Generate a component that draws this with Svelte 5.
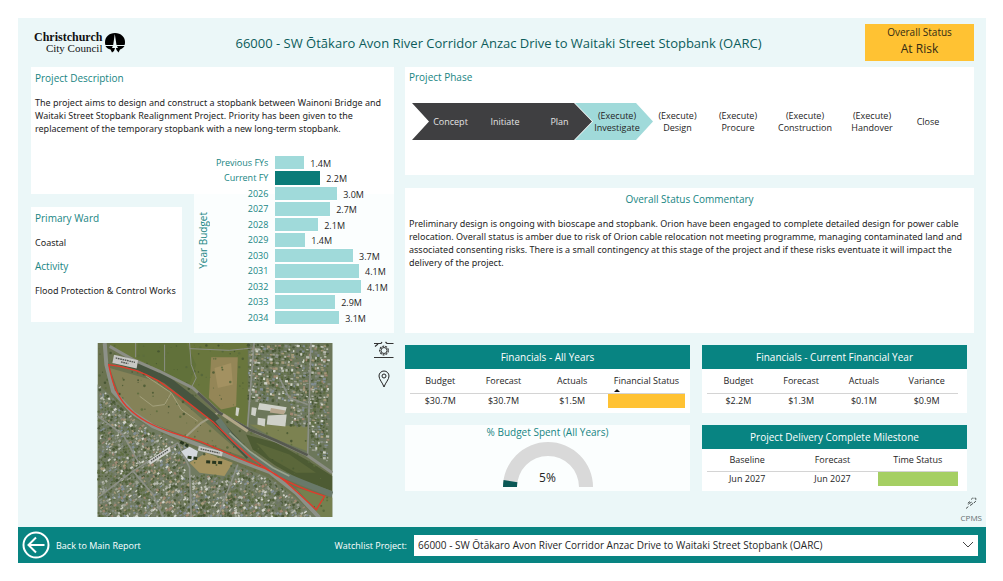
<script>
  const years = [
    ['Previous FYs', '1.4M', 29],
    ['Current FY', '2.2M', 45],
    ['2026', '3.0M', 62],
    ['2027', '2.7M', 55],
    ['2028', '2.1M', 43],
    ['2029', '1.4M', 30],
    ['2030', '3.7M', 78],
    ['2031', '4.1M', 84],
    ['2032', '4.1M', 86],
    ['2033', '2.9M', 60],
    ['2034', '3.1M', 64]
  ];
  const track = 119;

  const phases = [
    ['', 'Concept'], ['', 'Initiate'], ['', 'Plan'],
    ['(Execute)', 'Investigate'], ['(Execute)', 'Design'], ['(Execute)', 'Procure'],
    ['(Execute)', 'Construction'], ['(Execute)', 'Handover'], ['', 'Close']
  ];

  // Aerial view: roofs and trees are scattered with a seeded generator.
  let seed = 7;
  const rnd = () => (seed = (seed * 16807) % 2147483647) / 2147483647;
  const at = (line, x) => {
    for (let i = 1; i < line.length; i++) {
      const [x0, y0] = line[i - 1];
      const [x1, y1] = line[i];
      if (x <= x1) return y0 + ((x - x0) / (x1 - x0)) * (y1 - y0);
    }
    return line[line.length - 1][1];
  };
  const south = [[24, 150], [60, 180], [130, 250], [190, 290], [260, 318], [440, 392], [540, 430], [620, 490], [680, 560], [729, 600]];
  const north = [[24, 30], [130, 75], [310, 165], [390, 235], [480, 285], [650, 355], [729, 410]];
  const roofColours = ['#a3a69b', '#8b9188', '#c4c6bd', '#7b8278', '#a88a76', '#8793a0', '#e2e3dd', '#6d7568', '#b0a080'];
  const treeColours = ['#4a5a33', '#55663b', '#435230', '#5d6d3e'];
  const roofs = [];
  const trees = [];
  for (let y = 30; y < 544; y += 8) {
    for (let x = 26; x < 718; x += 9) {
      const px = x + rnd() * 5;
      const py = y + rnd() * 5;
      const c = rnd();
      const field = px > 285 && px < 425 && py < 425;
      const lower = py > at(south, px) + 6 && !field;
      const upper = px > 474 && py < at(north, px) - 18 && !(py > 200 && px < 600) && !(py > 275 && px < 660);
      if (lower || upper) {
        if (c < 0.6) roofs.push({ x: px, y: py, w: 4 + rnd() * 6, h: 3 + rnd() * 5, c: roofColours[Math.floor(rnd() * 9)], r: lower ? -35 : 5 });
        else trees.push({ x: px, y: py, r: 2 + rnd() * 3, c: treeColours[Math.floor(rnd() * 4)] });
      } else if (c < 0.08) trees.push({ x: px, y: py, r: 1 + rnd() * 3, c: treeColours[Math.floor(rnd() * 4)] });
    }
  }
</script>

<div class="page">
  <div class="board">
    <header>
      <div class="logo">
        <div class="wordmark"><b>Christchurch</b><span>City Council</span></div>
        <svg viewBox="0 0 22 22" width="22" height="22" aria-hidden="true">
          <path d="M11 1C17 1 21 5 21 10C21 11 21 12 20.600 13H1.400C1 12 1 11 1 10C1 5 5 1 11 1Z" />
          <path d="M1.500 14H20.500C19.500 16 17.500 17 16 17.500L14.500 20.500L12.500 18L11.500 14.500L10 19L8 20.500L6.500 17.500C4 17 2.500 16 1.500 14Z" />
          <path d="M10.800 2L12.500 13L14 16H8L9.200 13Z" fill="#ebf7f8" />
        </svg>
      </div>
      <h1>66000 - SW Ōtākaro Avon River Corridor Anzac Drive to Waitaki Street Stopbank (OARC)</h1>
      <div class="overall"><span>Overall Status</span><strong>At Risk</strong></div>
    </header>

    <main>
      <div class="left">
        <section class="description">
          <h2>Project Description</h2>
          <p>The project aims to design and construct a stopbank between Wainoni Bridge and<br />Waitaki Street Stopbank Realignment Project. Priority has been given to the<br />replacement of the temporary stopbank with a new long-term stopbank.</p>
        </section>
        <section class="ward">
          <h2>Primary Ward</h2>
          <p>Coastal</p>
          <h2>Activity</h2>
          <p>Flood Protection &amp; Control Works</p>
        </section>
        <div class="chartback"></div>
        <section class="chart">
          <h2 class="axis">Year Budget</h2>
          <div class="rows">
            {#each years as [label, amount, size], i}
              <div class="row">
                <span class="year">{label}</span>
                <span class="track">
                  <span class="bar" class:current={i === 1} style="width: {(size / track) * 100}%"></span>
                  <span class="amount">{amount}</span>
                </span>
              </div>
            {/each}
          </div>
        </section>
      </div>

      <div class="right">
        <section class="phase">
          <h2>Project Phase</h2>
          <div class="stepper">
            <svg viewBox="0 0 542 36" preserveAspectRatio="none" aria-hidden="true">
              <polygon points="0,0 162,0 180,18 162,36 0,36 17,18" fill="#3f3f41" />
              <polygon points="163,0 224,0 241,18 224,36 163,36 181,18" fill="#a0dada" />
            </svg>
            <ol>
              {#each phases as [prefix, name], i}
                <li class:done={i < 3}>
                  {#if prefix}<span>{prefix}</span>{/if}
                  <span>{name}</span>
                </li>
              {/each}
            </ol>
          </div>
        </section>
        <section class="commentary">
          <h2>Overall Status Commentary</h2>
          <p>Preliminary design is ongoing with bioscape and stopbank. Orion have been engaged to complete detailed design for power cable<br />relocation. Overall status is amber due to risk of Orion cable relocation not meeting programme, managing contaminated land and<br />associated consenting risks. There is a small contingency at this stage of the project and if these risks eventuate it will impact the<br />delivery of the project.</p>
        </section>
      </div>

      <div class="mapzone">
        <svg class="map" viewBox="24 25 705 523" role="img" aria-label="Aerial map of the stopbank">
          <rect x="24" y="25" width="705" height="523" fill="#6b7350" />
          <path d="M60 100L200 140L300 220L470 370L330 320L170 260L100 210Z" fill="#858258" />
          <path d="M62 25H475V280L390 230L310 155L210 105L60 40Z" fill="#69763d" />
          <path d="M145 25H290L320 90L300 150L200 100L140 70Z" fill="#61713a" />
          <path d="M365 68H445L440 215L395 225L358 190Z" fill="#948657" />
          <path d="M375 100L425 85L430 150L385 160Z" fill="#a39161" />
          <path d="M475 25H729V410L650 360L480 280Z" fill="#6c775a" />
          <path d="M480 270L655 275V350L560 315Z" fill="#7c8251" />
          <path d="M24 150L60 180L130 250L260 318L440 392L540 430L620 490L680 548H24Z" fill="#717b61" />
          <path d="M470 300L560 325L650 375L729 425V470L640 440L560 395L490 345Z" fill="#4d5b33" />
          <path d="M500 325L600 360L680 415L620 415L540 370Z" fill="#5b673a" />
          <path d="M300 385L350 355L430 385L405 425L330 415Z" fill="#a4935f" />
          <path d="M620 460L729 490V548H695Z" fill="#75804f" />
          <g opacity="0.85">
            {#each trees as t}<circle cx={t.x} cy={t.y} r={t.r} fill={t.c} />{/each}
            {#each roofs as r}<rect x={r.x} y={r.y} width={r.w} height={r.h} fill={r.c} transform="rotate({r.r} {r.x} {r.y})" />{/each}
          </g>
          <g fill="none" stroke="#8c9086" stroke-width="5">
            <path d="M494 25L474 280M665 25L655 360M24 490L130 410L265 325M265 325L300 400L305 548M445 390L385 548M24 245L100 300L150 390M130 410L190 480L220 548M570 130L600 190L655 210" />
            <path d="M300 25L305 90L320 130L305 160M300 42L420 47L490 40M138 25V68M225 30V110" stroke-width="3" />
            <path d="M150 185L190 215L225 210L245 175L275 225L325 260M170 125L245 175" stroke-width="3" stroke="#a4a17c" />
            <path d="M290 305L335 265L385 235" stroke-width="6" stroke="#a09d84" />
          </g>
          <path d="M75 75L150 96L230 135L300 190L370 248L420 302L480 365" fill="none" stroke="#47543f" stroke-width="24" />
          <path d="M385 255L420 302L480 360L560 412L640 445L729 480" fill="none" stroke="#69796a" stroke-width="18" />
          <path d="M420 295L480 350L550 400L600 425" fill="none" stroke="#9aa38e" stroke-width="5" />
          <path d="M60 35L130 75L210 110L310 160L390 235L480 285L560 320L650 360L729 415" fill="none" stroke="#8b8e84" stroke-width="9" />
          <path d="M325 175L390 235L480 285L560 318L655 362" fill="none" stroke="#56594f" stroke-width="8" />
          <path d="M400 240L475 290" fill="none" stroke="#b0a687" stroke-width="9" />
          <path d="M45 25L50 90L70 170L130 235L190 275L260 305L350 340L440 375L540 412L620 475L690 550" fill="none" stroke="#8d9188" stroke-width="12" />
          <g fill="#cfd1c9">
            <path d="M510 205L592 218L587 235L505 225ZM487 218L502 220L498 245L485 241ZM535 243L592 240L588 276L532 270ZM505 250L528 253L526 276L504 270ZM440 218L450 220L446 245L438 242Z" />
            <path d="M275 350L300 337L325 350L320 372L298 382Z" fill="#d4d8de" />
            <path d="M545 220L588 228L584 240L541 234Z" fill="#b7a78e" />
          </g>
          <g>
            <path d="M73 60L145 77L141 102L68 85Z" fill="#c7c8c5" />
            <path d="M176 379L240 336L244 350L181 391Z" fill="#d1d2cf" />
            <path d="M328 334L400 352L397 366L325 348Z" fill="#c7c8c5" />
            <path d="M78 70L136 83M94 82L116 87M184 380L236 346M333 343L390 356" stroke="#50534f" stroke-width="4" stroke-dasharray="5 2" />
            <path d="M272 322L296 335M294 368L323 372M350 382L398 385" stroke="#28361f" stroke-width="9" stroke-dasharray="12 6" />
          </g>
          <path d="M57 90C110 96 160 112 205 138C260 175 310 215 370 262L430 320L485 370L560 422C610 452 650 468 706 485L681 526L620 470C580 430 545 405 500 392L450 372L330 320L250 295C190 275 150 255 110 215C75 175 65 130 57 90Z" fill="none" stroke="#e13a2c" stroke-width="4" />
        </svg>
        <div class="tools">
          <svg width="20" height="18" viewBox="0 0 20 18" fill="none" stroke="#333">
            <path d="M0 2.500H7L8 1M11.500 1L13 2.500H19.500M0 16.500H19.500M1 5.500L4 3" stroke-width="1.200" />
            <circle cx="10" cy="9.500" r="3" stroke-width="1" />
            <circle cx="10" cy="9.500" r="4.300" stroke-width="1.200" stroke-dasharray="2 1" />
          </svg>
          <svg width="12" height="18" viewBox="0 0 12 18" fill="none" stroke="#222">
            <path d="M6 17C4.500 12.500 1 9.500 1 6A5 5 0 0 1 11 6C11 9.500 7.500 12.500 6 17Z" />
            <circle cx="6" cy="6" r="2" />
          </svg>
        </div>
      </div>

      <div class="facts">
        <section>
          <h3>Financials - All Years</h3>
          <table class="all">
            <thead><tr><th>Budget</th><th>Forecast</th><th>Actuals</th><th class="sorted">Financial Status</th></tr></thead>
            <tbody><tr><td>$30.7M</td><td>$30.7M</td><td>$1.5M</td><td class="amber" aria-label="Amber"></td></tr></tbody>
          </table>
        </section>
        <section>
          <h3>Financials - Current Financial Year</h3>
          <table class="year-table">
            <thead><tr><th>Budget</th><th>Forecast</th><th>Actuals</th><th>Variance</th></tr></thead>
            <tbody><tr><td>$2.2M</td><td>$1.3M</td><td>$0.1M</td><td>$0.9M</td></tr></tbody>
          </table>
        </section>
        <section class="spent">
          <h2>% Budget Spent (All Years)</h2>
          <svg viewBox="0 0 92 47" width="92" height="47" aria-hidden="true">
            <path d="M1 46A45 45 0 0 1 91 46H77A31 31 0 0 0 15 46Z" fill="#d9d9d9" />
            <path d="M1 46Q1 42 1.600 39L15.400 41.200Q15 43 15 46Z" fill="#0b5856" />
          </svg>
          <output>5%</output>
        </section>
        <section>
          <h3>Project Delivery Complete Milestone</h3>
          <table class="milestone">
            <thead><tr><th>Baseline</th><th>Forecast</th><th>Time Status</th></tr></thead>
            <tbody><tr><td>Jun 2027</td><td>Jun 2027</td><td class="green" aria-label="Green"></td></tr></tbody>
          </table>
        </section>
      </div>
    </main>

    <a class="cpms" href="#cpms">
      <svg width="12" height="12" viewBox="0 0 12 12" fill="none" stroke="#4c5454">
        <path d="M6 2.500L7.500 1.200H10.800V4L9 6L7 6.500M5 4.500L3 6L3.500 8M5 8.500L7.500 7M4 6.500L7 5M1 11.500L3.500 9.500" stroke-dasharray="3 1" />
      </svg>
      <span>CPMS</span>
    </a>

    <footer>
      <a class="back" href="#main">
        <svg width="28" height="28" viewBox="0 0 28 28" fill="none" stroke="#fff" stroke-width="2">
          <circle cx="14" cy="14" r="12.500" />
          <path d="M22.500 14H6.500M14 6.500L6.500 14L14 21.500" />
        </svg>
        <span>Back to Main Report</span>
      </a>
      <label for="project">Watchlist Project:</label>
      <div class="picker">
        <select id="project">
          <option>66000 - SW Ōtākaro Avon River Corridor Anzac Drive to Waitaki Street Stopbank (OARC)</option>
        </select>
        <svg width="12" height="8" viewBox="0 0 12 8" fill="none" stroke="#444" aria-hidden="true"><path d="M1 1L6 6L11 1" /></svg>
      </div>
    </footer>
  </div>
</div>

<style>
  :global(body) { margin: 0; background: #fff; }
  * { box-sizing: border-box; }
  .page {
    padding: 18px 17px 18px 18px;
    font-family: "Open Sans", "Noto Sans", sans-serif;
    font-size: 9px;
    line-height: 13px;
    color: #252525;
  }
  .board { background: #ebf7f8; display: flex; flex-direction: column; }
  h1, h2, h3, p, ol { margin: 0; padding: 0; font-weight: 400; }
  p { font-family: "Noto Sans", "Open Sans", sans-serif; }
  h2 { font-size: 10px; line-height: 14px; color: #178583; }
  section { background: #fff; }

  header {
    display: grid;
    grid-template-columns: 109px 1fr 109px;
    padding: 6px 12px 6px 16px;
    align-items: center;
  }
  .logo { display: flex; align-items: center; gap: 2px; color: #111; }
  .wordmark {
    display: flex;
    flex-direction: column;
    align-items: flex-end;
    font-family: "Liberation Serif", serif;
    font-size: 11px;
    line-height: 11px;
  }
  .wordmark b { font-size: 12px; }
  h1 { font-size: 13px; line-height: 16px; font-weight: 500; color: #0c5c5b; text-align: center; padding-right: 11px; }
  .overall {
    background: #ffc233;
    display: flex;
    flex-direction: column;
    align-items: center;
    height: 37px;
    font-size: 10px;
    line-height: 16px;
    color: #332b14;
  }
  .overall strong { font-size: 12px; line-height: 18px; font-weight: 400; }

  main {
    display: grid;
    grid-template-columns: 363fr 569fr;
    column-gap: 11px;
    padding: 0 12px 0 13px;
  }

  .left {
    display: grid;
    grid-template-columns: 163fr 200fr;
    grid-template-rows: 82px 45px 139px;
  }
  .description { grid-area: 1 / 1 / 3 / 3; padding: 4px; }
  .description p { margin-top: 11px; white-space: nowrap; }
  .chartback { grid-area: 3 / 2; background: #fbfefe; }
  .chart {
    grid-area: 2 / 1 / 4 / 3;
    margin-left: auto;
    width: 55%;
    background: none;
    display: grid;
    grid-template-columns: 18px 1fr;
    padding: 6px 0 8px;
  }
  .axis { writing-mode: vertical-rl; transform: rotate(180deg); justify-self: center; align-self: center; }
  .rows { display: grid; grid-template-rows: repeat(11, minmax(0, 1fr)); height: 170px; }
  .row { display: grid; grid-template-columns: 56px 1fr; column-gap: 7px; }
  .year { color: #178583; text-align: right; white-space: nowrap; line-height: 15px; }
  .track { display: flex; gap: 6px; }
  .bar { background: #a0dada; border-bottom: 1px solid #fff; border-top: 1px solid #fff; flex: none; }
  .bar.current { background: #0b7b78; }
  .amount { line-height: 13px; padding-top: 2px; }

  .ward { grid-area: 3 / 1; margin: 13px 12px 11px 0; padding: 4px; white-space: nowrap; }
  .ward p { margin: 11px 0 10px; }

  .right { display: grid; grid-template-rows: 108px 1fr; row-gap: 13px; }
  .phase { padding: 3px 4px; }
  .stepper { display: grid; margin: 19px 16px 0 3px; }
  .stepper svg { grid-area: 1 / 1; width: 100%; height: 37px; }
  ol {
    grid-area: 1 / 1;
    display: grid;
    grid-template-columns: 55fr 54fr 55fr 60fr 61fr 60fr 74fr 60fr 52fr;
    list-style: none;
    padding-left: 11px;
    line-height: 12px;
  }
  li { display: flex; flex-direction: column; justify-content: center; align-items: center; z-index: 1; }
  li.done { color: #e4e4e4; }
  .commentary { padding: 4px; }
  .commentary h2 { text-align: center; }
  .commentary p { margin-top: 11px; white-space: nowrap; }

  .mapzone {
    display: grid;
    grid-template-columns: 1fr 20px;
    padding: 10px 0 0 66px;
    align-items: start;
  }
  .map { width: 236px; height: 174px; display: block; }
  .tools { display: flex; flex-direction: column; align-items: center; gap: 11px; margin-top: -2px; }

  .facts {
    display: grid;
    grid-template-columns: 285fr 265fr;
    grid-template-rows: 68px 66px;
    gap: 12px;
    padding: 12px 7px 0 0;
    align-content: start;
  }
  h3 { background: #088482; color: #fff; font-size: 10px; line-height: 24px; text-align: center; }
  table { border-collapse: collapse; table-layout: fixed; width: calc(100% - 10px); margin: 0 5px; }
  th, td { font-weight: 400; padding: 0; text-align: center; white-space: nowrap; }
  th { height: 24px; border-bottom: 1px solid #d4d4d4; position: relative; }
  td { height: 15px; }
  .all th:nth-child(1) { width: 22%; }
  .all th:nth-child(2) { width: 24%; }
  .all th:nth-child(3) { width: 26%; }
  .year-table, .milestone { width: calc(100% - 14px); }
  .milestone th { height: 22px; }
  .milestone th:nth-child(1) { width: 32%; }
  .milestone th:nth-child(2) { width: 36%; }
  .sorted::after {
    content: "";
    position: absolute;
    left: 6px;
    bottom: 1px;
    border: 3px solid transparent;
    border-top: 0;
    border-bottom-color: #111;
  }
  .amber { background: #ffc233; }
  .green { background: #a5cf63; }
  .spent { display: grid; justify-items: center; align-content: start; background: #fbfefe; }
  .spent h2 { grid-area: 1 / 1; }
  .spent svg { grid-area: 2 / 1; margin-top: 2px; }
  .spent output { grid-area: 2 / 1; align-self: end; font-size: 12px; line-height: 16px; padding-bottom: 2px; }

  .cpms {
    align-self: flex-end;
    display: flex;
    flex-direction: column;
    align-items: center;
    color: #667070;
    text-decoration: none;
    font-size: 8px;
    line-height: 10px;
    margin: -20px 4px 4px 0;
    gap: 4px;
  }

  footer { background: #088482; color: #fff; display: flex; align-items: center; padding: 4px 8px 4px 4px; }
  .back { display: flex; align-items: center; gap: 6px; color: #fff; text-decoration: none; flex: 1; }
  label { margin-right: 7px; }
  .picker { display: grid; width: 59%; align-items: center; }
  select {
    grid-area: 1 / 1;
    appearance: none;
    border: 0;
    border-radius: 0;
    background: #fff;
    color: #252525;
    font-family: inherit;
    font-size: 10px;
    width: 100%;
    height: 21px;
    padding: 0 20px 0 4px;
  }
  .picker svg { grid-area: 1 / 1; justify-self: end; margin-right: 4px; pointer-events: none; }
</style>
